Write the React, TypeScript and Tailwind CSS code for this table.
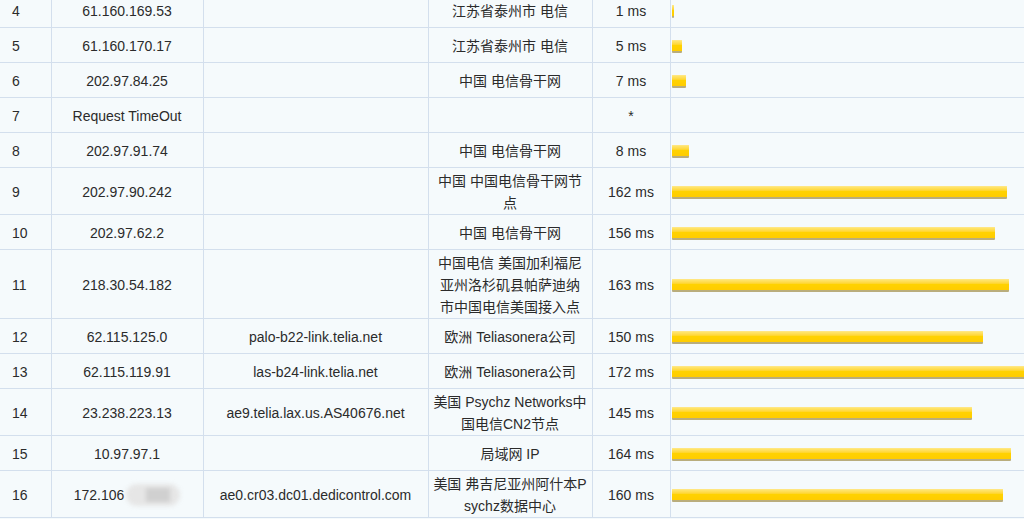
type Hop = {
  n: number;
  ip: string;
  host: string;
  loc: string;
  ms: number | null;
  masked?: boolean;
};

const hops: Hop[] = [
  { n: 4, ip: '61.160.169.53', host: '', loc: '江苏省泰州市 电信', ms: 1 },
  { n: 5, ip: '61.160.170.17', host: '', loc: '江苏省泰州市 电信', ms: 5 },
  { n: 6, ip: '202.97.84.25', host: '', loc: '中国 电信骨干网', ms: 7 },
  { n: 7, ip: 'Request TimeOut', host: '', loc: '', ms: null },
  { n: 8, ip: '202.97.91.74', host: '', loc: '中国 电信骨干网', ms: 8 },
  { n: 9, ip: '202.97.90.242', host: '', loc: '中国 中国电信骨干网节点', ms: 162 },
  { n: 10, ip: '202.97.62.2', host: '', loc: '中国 电信骨干网', ms: 156 },
  { n: 11, ip: '218.30.54.182', host: '', loc: '中国电信 美国加利福尼亚州洛杉矶县帕萨迪纳市中国电信美国接入点', ms: 163 },
  { n: 12, ip: '62.115.125.0', host: 'palo-b22-link.telia.net', loc: '欧洲 Teliasonera公司', ms: 150 },
  { n: 13, ip: '62.115.119.91', host: 'las-b24-link.telia.net', loc: '欧洲 Teliasonera公司', ms: 172 },
  { n: 14, ip: '23.238.223.13', host: 'ae9.telia.lax.us.AS40676.net', loc: '美国 Psychz Networks中国电信CN2节点', ms: 145 },
  { n: 15, ip: '10.97.97.1', host: '', loc: '局域网 IP', ms: 164 },
  { n: 16, ip: '172.106', host: 'ae0.cr03.dc01.dedicontrol.com', loc: '美国 弗吉尼亚州阿什本Psychz数据中心', ms: 160, masked: true },
];

const cell = 'border border-[#d3dfed] h-[35px] pt-[2px] pb-0 align-middle';

function Bar({ ms }: { ms: number }) {
  return (
    <div
      className="h-[13px] rounded-[1px] border-b-2 border-[#b9ad7c] bg-gradient-to-b from-[#ffe97a] via-[#ffd200] to-[#ffcc00] shadow-[inset_0_1px_0_#ffe680]"
      style={{ width: `${Math.max(2, Math.round(ms * 2.07))}px` }}
    />
  );
}

export default function App() {
  return (
    <div className="h-[519px] w-[1024px] overflow-hidden bg-[#f5fafc]">
      <table
        className="-mt-[8px] w-[1024px] table-fixed border-collapse text-[14px] leading-[22px] text-[#2b2b2b]"
        style={{ fontFamily: '"Liberation Sans", "Noto Sans CJK SC", sans-serif' }}
      >
        <colgroup>
          <col className="w-[51px]" />
          <col className="w-[152px]" />
          <col className="w-[225px]" />
          <col className="w-[164px]" />
          <col className="w-[78px]" />
          <col />
        </colgroup>
        <tbody>
          {hops.map((h) => (
            <tr key={h.n}>
              <td className={`${cell} border-l-0 pl-3 text-left`}>{h.n}</td>
              <td className={`${cell} text-center`}>
                {h.masked ? (
                  <span className="inline-flex items-center">
                    {h.ip}
                    <span className="relative ml-[2px] inline-block h-[22px] w-[54px] rounded-full bg-[#e6e6e6] blur-[2px]">
                      <span className="absolute left-[20px] top-[4px] h-[14px] w-[24px] bg-[#d0d0d0]" />
                    </span>
                  </span>
                ) : (
                  h.ip
                )}
              </td>
              <td className={`${cell} px-1 text-center`}>{h.host}</td>
              <td className={`${cell} px-0 text-center`}>
                <div className="mx-auto w-[153.6px] break-all">{h.loc}</div>
              </td>
              <td className={`${cell} text-center`}>{h.ms === null ? '*' : `${h.ms} ms`}</td>
              <td className={`${cell} border-r-0 pl-[1px] pr-0`}>{h.ms !== null && <Bar ms={h.ms} />}</td>
            </tr>
          ))}
        </tbody>
      </table>
    </div>
  );
}
